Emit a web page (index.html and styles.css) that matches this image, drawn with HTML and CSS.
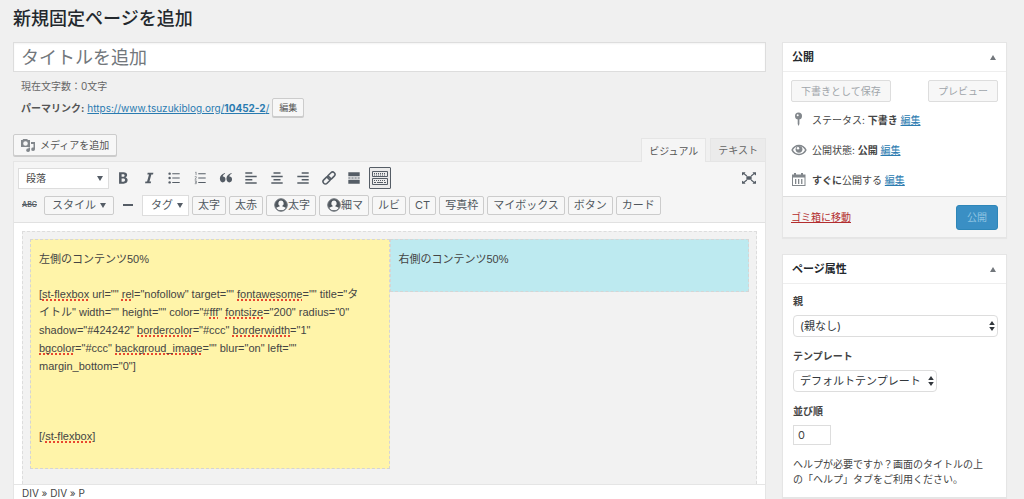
FILE: index.html
```html
<!DOCTYPE html>
<html lang="ja">
<head>
<meta charset="utf-8">
<title>新規固定ページを追加</title>
<link rel="stylesheet" href="styles.css">
</head>
<body>
<main class="page">
  <h1 class="page-title">新規固定ページを追加</h1>
  <div class="columns">
    <section class="main-col">
      <input class="title-input" type="text" placeholder="タイトルを追加" aria-label="タイトルを追加">
      <p class="count">現在文字数：0文字</p>
      <div class="permalink"><strong>パーマリンク:</strong> <a href="#">https://www.tsuzukiblog.org/<b>10452-2</b>/</a> <button class="btn btn-small" type="button">編集</button></div>
      <div class="editor-head">
        <button class="btn media-btn" type="button">
          <svg width="14" height="14" viewBox="0 0 14 14" fill="#82878c"><path fill-rule="evenodd" d="M0 2h1.500L2.200 1h4l.7 1H9v7H0zM4.500 3.200a2.300 2.300 0 1 0 0 4.600 2.300 2.300 0 0 0 0-4.600z"/><path d="M10 4h4v7.300a1.900 1.700 0 1 1-1.500-1.700V6H10z"/><path d="M9 9.500v2.800a1.900 1.700 0 1 1-1.500-1.700V9.500z"/></svg>
          メディアを追加</button>
        <div class="tabs">
          <button class="tab tab-active" type="button">ビジュアル</button>
          <button class="tab" type="button">テキスト</button>
        </div>
      </div>
      <div class="editor">
        <div class="toolbar">
          <div class="tool-row">
            <button class="format" type="button">段落 <span class="caret"></span></button>
            <div class="icons">
              <button class="icon" type="button" aria-label="太字"><svg viewBox="0 0 16 16"><path fill-rule="evenodd" d="M3.500 1.500h5c2.700 0 4.200 1.200 4.200 3.200 0 1.400-.8 2.300-1.900 2.700 1.600.4 2.500 1.400 2.500 3 0 2.600-1.800 4.100-4.700 4.100H3.500zM6.400 3.800v2.700h1.700c1.100 0 1.700-.5 1.700-1.400s-.6-1.300-1.700-1.300zm0 4.900v3.500h2c1.200 0 1.900-.6 1.900-1.800 0-1.100-.7-1.700-1.900-1.700z"/></svg></button>
              <button class="icon" type="button" aria-label="斜体"><svg viewBox="0 0 16 16"><path d="M6.500 2h6.500l-.4 1.900h-1.900L8.500 12.100h1.900L10 14H3.500l.4-1.900h1.900L8 3.900H6.100z"/></svg></button>
              <button class="icon" type="button" aria-label="番号なしリスト"><svg viewBox="0 0 16 16"><circle cx="3" cy="3" r="1.400"/><circle cx="3" cy="8" r="1.400"/><circle cx="3" cy="13" r="1.400"/><path d="M6 2.500h8.500v1.100H6zM6 7.500h8.500v1.100H6zM6 12.500h8.500v1.100H6z"/></svg></button>
              <button class="icon" type="button" aria-label="番号付きリスト"><svg viewBox="0 0 16 16"><path d="M6 2.500h8.500v1.100H6zM6 7.500h8.500v1.100H6zM6 12.500h8.500v1.100H6z"/><path class="thin" d="M2.500 1.800l1-.7v3.600M2 6.500h1.800v1.100L2.200 9.400H4M2 11.200h1.800v1.500H2.400h1.400v1.800H2"/></svg></button>
              <button class="icon" type="button" aria-label="引用"><svg viewBox="0 0 16 16"><path d="M7 3.200C5.200 4 4.400 5 4.300 6.400 6 6.200 7.400 7.500 7.400 9.500c0 2.100-1.200 3.500-3.100 3.500C2.200 13 1 11.400 1 8.700c0-3.100 2-5.400 5.700-6.500zM14.500 3.200c-1.800.8-2.600 1.800-2.700 3.200 1.700-.2 3.100 1.100 3.100 3.100 0 2.100-1.200 3.500-3.100 3.500-2.100 0-3.300-1.600-3.300-4.300 0-3.100 2-5.400 5.700-6.500z"/></svg></button>
              <button class="icon" type="button" aria-label="左寄せ"><svg viewBox="0 0 16 16"><path d="M1.500 1.500h8v1.700h-8zM1.500 5.300h13V7h-13zM1.500 9.100h8v1.700h-8zM1.500 12.900h13v1.700h-13z"/></svg></button>
              <button class="icon" type="button" aria-label="中央揃え"><svg viewBox="0 0 16 16"><path d="M4 1.500h8v1.700H4zM1.500 5.300h13V7h-13zM4 9.100h8v1.700H4zM1.500 12.900h13v1.700h-13z"/></svg></button>
              <button class="icon" type="button" aria-label="右寄せ"><svg viewBox="0 0 16 16"><path d="M6.500 1.500h8v1.700h-8zM1.500 5.300h13V7h-13zM6.500 9.100h8v1.700h-8zM1.500 12.900h13v1.700h-13z"/></svg></button>
              <button class="icon" type="button" aria-label="リンク"><svg viewBox="0 0 16 16"><g class="line" transform="rotate(-45 8 8)"><rect x="-0.500" y="5.300" width="9.500" height="5.400" rx="2.700"/><rect x="7" y="5.300" width="9.500" height="5.400" rx="2.700"/></g></svg></button>
              <button class="icon" type="button" aria-label="続きを読む"><svg viewBox="0 0 16 16"><path d="M1.500 1.500h13v4.500h-13zM1.500 10h13v4.500h-13zM1.500 7.400h2.600v1.200H1.500zM5 7.400h2.600v1.200H5zM8.500 7.400h2.600v1.200H8.500zM12 7.400h2.500v1.200H12z"/></svg></button>
              <button class="icon pressed" type="button" aria-label="ツールバー切り替え"><svg viewBox="0 0 16 16"><path class="keys" d="M.5 1.500h15v5H.5zM.5 8.500h15v6H.5z"/><path class="dots" d="M2 3.500h12M2 5h12M2 10.500h12"/><path d="M2 12h2v1H2zM5 12h6v1H5zM12 12h2v1h-2z"/></svg></button>
            </div>
            <button class="icon full" type="button" aria-label="集中執筆モード"><svg viewBox="0 0 16 16"><path d="M5 6h6v4H5z"/><path d="M0 1.500h4L3 2.800l3 2.400-.9 1.100-3.100-2.500L0 5zM16 1.500V5l-2-1.200-3.100 2.500-.9-1.100 3-2.400-1-1.300zM0 14.500V11l2 1.200 3.100-2.500.9 1.100-3 2.400 1 1.300zM16 14.500h-4l1-1.300-3-2.400.9-1.100 3.100 2.500L16 11z"/></svg></button>
          </div>
          <div class="tool-row tool-row-2">
            <button class="abc" type="button"><s>ABC</s></button>
            <button class="chip chip-wide" type="button">スタイル <span class="caret"></span></button>
            <button class="rule" type="button" aria-label="横ライン"><span></span></button>
            <button class="chip chip-white" type="button">タグ <span class="caret"></span></button>
            <button class="chip" type="button">太字</button>
            <button class="chip" type="button">太赤</button>
            <button class="chip chip-user" type="button"><svg class="user" viewBox="0 0 14 14"><circle cx="7" cy="7" r="6.200"/><path fill-rule="evenodd" d="M7 1a6 6 0 1 1 0 12A6 6 0 0 1 7 1zM7 2.600a2.700 2.800 0 0 0-1.400 5.200v.6c-1.700.3-2.900.9-3.400 1.600.9 1.400 2.700 2.300 4.800 2.300s3.900-.9 4.800-2.300c-.5-.7-1.700-1.300-3.400-1.600v-.6A2.700 2.800 0 0 0 7 2.600z"/></svg>太字</button>
            <button class="chip chip-user" type="button"><svg class="user" viewBox="0 0 14 14"><circle cx="7" cy="7" r="6.200"/><path fill-rule="evenodd" d="M7 1a6 6 0 1 1 0 12A6 6 0 0 1 7 1zM7 2.600a2.700 2.800 0 0 0-1.400 5.200v.6c-1.700.3-2.900.9-3.400 1.600.9 1.400 2.700 2.300 4.800 2.300s3.900-.9 4.800-2.300c-.5-.7-1.700-1.300-3.400-1.600v-.6A2.700 2.800 0 0 0 7 2.600z"/></svg>細マ</button>
            <button class="chip" type="button">ルビ</button>
            <button class="chip" type="button">CT</button>
            <button class="chip" type="button">写真枠</button>
            <button class="chip" type="button">マイボックス</button>
            <button class="chip" type="button">ボタン</button>
            <button class="chip" type="button">カード</button>
          </div>
        </div>
        <div class="canvas">
          <div class="flexbox">
            <div class="cell cell-left">
              <p>左側のコンテンツ50%</p>
              <p>[<u>st-flexbox</u> url="" <u>rel</u>="nofollow" target="" <u>fontawesome</u>="" title="タ<br>イトル" width="" height="" color="#<u>fff</u>" <u>fontsize</u>="200" radius="0"<br>shadow="#424242" <u>bordercolor</u>="#ccc" <u>borderwidth</u>="1"<br><u>bgcolor</u>="#ccc" <u>backgroud_image</u>="" blur="on" left=""<br>margin_bottom="0"]</p>
              <p><br></p>
              <p>[/<u>st-flexbox</u>]</p>
            </div>
            <div class="cell cell-right"><p>右側のコンテンツ50%</p></div>
          </div>
        </div>
        <div class="status">DIV » DIV » P</div>
      </div>
    </section>
    <aside class="side-col">
      <section class="box">
        <h2 class="box-title">公開 <span class="toggle"></span></h2>
        <div class="publish">
          <div class="publish-actions">
            <button class="btn btn-off" type="button" disabled>下書きとして保存</button>
            <button class="btn btn-off" type="button" disabled>プレビュー</button>
          </div>
          <div class="meta"><svg viewBox="0 0 16 16"><circle cx="7.500" cy="4" r="3.500"/><path d="M6.700 7h1.700v5l-.8 2-.9-2z"/><circle class="hole" cx="6.700" cy="3.200" r="1"/></svg><p>ステータス: <b>下書き</b> <a href="#">編集</a></p></div>
          <div class="meta"><svg viewBox="0 0 16 16"><path fill-rule="evenodd" d="M8 2.800c3.500 0 6.300 2 7.700 5.200-1.400 3.200-4.200 5.200-7.700 5.200S1.700 11.200.3 8C1.700 4.800 4.500 2.800 8 2.800zm0 1.400C5.200 4.200 3.200 5.600 2 8c1.200 2.400 3.200 3.800 6 3.800s4.800-1.400 6-3.800c-1.200-2.400-3.200-3.800-6-3.800z"/><circle cx="8" cy="7.300" r="3.400"/><circle class="hole" cx="7" cy="6.200" r="1.200"/></svg><p>公開状態: <b>公開</b> <a href="#">編集</a></p></div>
          <div class="meta"><svg viewBox="0 0 16 16"><path fill-rule="evenodd" d="M1 2.500h2V1h2v1.500h5V1h2v1.500h2.500V14H1zM2 5.500V13h11.500V5.500z"/><path d="M4 7h1.300v5H4zM7 7h1.300v5H7zM10.100 7h1.300v5h-1.300z"/></svg><p><b>すぐに</b>公開する <a href="#">編集</a></p></div>
        </div>
        <div class="publish-foot"><a class="trash" href="#">ゴミ箱に移動</a><button class="primary" type="button" disabled>公開</button></div>
      </section>
      <section class="box">
        <h2 class="box-title">ページ属性 <span class="toggle"></span></h2>
        <div class="attrs">
          <label for="parent">親</label>
          <div class="select select-full"><select id="parent"><option>(親なし)</option></select><svg viewBox="0 0 6 10"><path d="M3 0l2.800 4H.2zM3 10L.2 6h5.600z"/></svg></div>
          <label for="template">テンプレート</label>
          <div class="select"><select id="template"><option>デフォルトテンプレート</option></select><svg viewBox="0 0 6 10"><path d="M3 0l2.800 4H.2zM3 10L.2 6h5.600z"/></svg></div>
          <label for="order">並び順</label>
          <input class="order" id="order" type="text" value="0">
          <p class="help">ヘルプが必要ですか？画面のタイトルの上の「ヘルプ」タブをご利用ください。</p>
        </div>
      </section>
    </aside>
  </div>
</main>
</body>
</html>
```
FILE: styles.css
```css
* { box-sizing: border-box; }
body {
  margin: 0;
  background: #f0f0f0;
  color: #444;
  font: 10px/14px Inter, "Noto Sans CJK JP", sans-serif;
}
p, h1, h2 { margin: 0; }
button, input, select { font: inherit; color: inherit; margin: 0; }
button { padding: 0; }
svg { display: block; flex: none; }
a { color: #2a7bb0; text-decoration: underline; }

.page { padding: 6px 17px 0 13px; }
.page-title { font-size: 18px; line-height: 26px; font-weight: 500; color: #23282d; }
.columns { display: grid; grid-template-columns: minmax(0, 1fr) 225px; gap: 16px; align-items: start; margin-top: 10px; }

.title-input {
  display: block; width: 100%; height: 30px; padding: 0 7px;
  border: 1px solid #ddd; background: #fff; font-size: 18px;
  box-shadow: inset 0 1px 2px rgba(0, 0, 0, .05);
}
.title-input::placeholder { color: #72777c; opacity: 1; }
.count { padding: 7px 8px 0; color: #666; }
.permalink { display: flex; align-items: center; gap: 3px; padding: 5px 8px 0; color: #555; }
.btn {
  border: 1px solid #ccc; border-radius: 2px; background: #f7f7f7;
  box-shadow: 0 1px 0 #ccc; color: #555;
}
.btn-small { height: 19px; padding: 0 6px; font-size: 9px; line-height: 14px; }
.editor-head { display: flex; justify-content: space-between; align-items: flex-end; margin-top: 17px; }
.media-btn { display: flex; align-items: center; gap: 5px; height: 22px; padding: 0 7px; margin-bottom: 5px; }
.tabs { display: flex; gap: 4px; }
.tab { height: 23px; padding: 0 7px; border: 1px solid #e5e5e5; border-bottom: 0; background: #ebebeb; color: #666; }
.tab-active { height: 24px; margin-bottom: -1px; background: #f5f5f5; color: #555; position: relative; z-index: 1; }

.editor { border: 1px solid #e5e5e5; border-bottom: 0; background: #fff; }
.toolbar { padding: 5px 4px 6px; background: #f5f5f5; border-bottom: 1px solid #e1e1e1; }
.tool-row { display: flex; align-items: center; height: 22px; }
.tool-row-2 { gap: 3px; margin-top: 5px; }
.format {
  display: flex; align-items: center; justify-content: space-between;
  width: 91px; height: 21px; padding: 0 5px 0 7px; border: 1px solid #ddd; background: #fff;
}
.caret { display: inline-block; border: 3px solid transparent; border-top: 5px solid #555d66; border-bottom: 0; }
.icons { display: flex; justify-content: space-between; width: 279px; margin-left: 3px; }
.icon { display: flex; align-items: center; justify-content: center; width: 22px; height: 22px; border: 1px solid transparent; background: none; }
.icon svg { width: 14px; height: 14px; fill: #555d66; }
.icon .thin { fill: none; stroke: #8a8f94; stroke-width: 1; }
.icon .line { fill: none; stroke: #555d66; stroke-width: 1.8; }
.icon .keys { fill: none; stroke: #555d66; stroke-width: 1; }
.icon .dots { fill: none; stroke: #555d66; stroke-width: 1; stroke-dasharray: 1 1; }
.icon.pressed { background: #ebebeb; border-color: #555d66; border-radius: 1px; }
.icon.pressed svg { width: 16px; height: 16px; }
.icon.full { margin-left: auto; margin-right: 1px; }

.abc { width: 23px; border: 0; background: none; font-size: 7px; font-weight: 600; color: #555d66; }
.chip {
  display: flex; align-items: center; height: 19px; padding: 0 5px;
  border: 1px solid #ccc; border-radius: 2px; background: #f7f7f7;
  font-size: 11px; line-height: 16px; color: #50575e; white-space: nowrap;
}
.chip-wide { gap: 4px; padding: 0 7px; }
.chip-white { gap: 4px; height: 21px; padding: 0 5px 0 8px; border-color: #ddd; border-radius: 0; background: #fff; }
.chip-user { height: 21px; padding: 0 5px 0 7px; gap: 0; }
.user { width: 14px; height: 14px; }
.user circle { fill: none; stroke: #50575e; stroke-width: 1; }
.user path { fill: #50575e; }
.rule { display: flex; align-items: center; justify-content: center; width: 22px; height: 19px; border: 0; background: none; }
.rule span { width: 10px; height: 2px; background: #555d66; }

.canvas { padding: 8px 8px 0; }
.flexbox { display: flex; align-items: flex-start; height: 253px; padding: 7px; border: 1px dashed #ddd; border-bottom: 0; background: #f2f2f2; }
.cell { flex: 1 1 0; min-width: 0; padding: 10px 8px 6px; border: 1px dashed #d5d5d5; font: 11px/18px "Liberation Sans", "Noto Sans CJK JP", sans-serif; color: #444; white-space: nowrap; }
.cell p { margin-bottom: 17px; }
.cell-left { background: #fff4a9; }
.cell-right { background: #bdeaf0; }
.cell u { text-decoration: underline dotted #e8472f; text-decoration-thickness: 2px; text-underline-offset: 1px; text-decoration-skip-ink: none; }
.status { padding: 1px 8px 0; height: 15px; border-top: 1px solid #e5e5e5; white-space: nowrap; }

.side-col { display: grid; gap: 16px; }
.box { border: 1px solid #e5e5e5; background: #fff; box-shadow: 0 1px 1px rgba(0, 0, 0, .04); }
.box-title {
  display: flex; align-items: center; justify-content: space-between; height: 29px;
  padding: 0 10px 0 9px; border-bottom: 1px solid #eee; font-size: 11px; font-weight: 700; color: #23282d;
}
.toggle { border: 3px solid transparent; border-bottom: 5px solid #72777c; border-top: 0; }
.publish { padding: 8px 8px 1px; }
.publish-actions { display: flex; justify-content: space-between; margin-bottom: 3px; }
.btn-off { height: 22px; padding: 0 9px; border-color: #ddd; box-shadow: none; color: #a0a5aa; }
.meta { display: flex; align-items: center; gap: 5px; height: 30px; }
.meta svg { width: 16px; height: 16px; fill: #82878c; }
.meta .hole { fill: #fff; }
.publish-foot { display: flex; align-items: center; justify-content: space-between; height: 41px; padding: 0 8px; border-top: 1px solid #ddd; background: #f5f5f5; }
.trash { color: #b32d2e; }
.primary { height: 25px; padding: 0 10px; border: 1px solid #2e86b8; border-radius: 3px; background: #3a8fc4; color: #8fc4e2; }

.attrs { display: flex; flex-direction: column; align-items: flex-start; padding: 10px 8px 10px 10px; }
.attrs label { font-weight: 700; }
.select { position: relative; margin: 7px 0 12px; }
.select-full { width: 100%; }
.select select { display: block; width: 100%; height: 22px; padding: 0 15px 0 6px; border: 1px solid #ddd; border-radius: 4px; background: #fff; font-size: 11px; appearance: none; color: #32373c; }
.select svg { position: absolute; right: 3px; top: 6px; width: 6px; height: 10px; fill: #32373c; pointer-events: none; }
.order { width: 38px; height: 20px; margin: 7px 0 12px; padding: 0 4px; border: 1px solid #ddd; background: #fff; font-size: 11px; }
.help { padding-right: 8px; line-height: 15px; }
```
